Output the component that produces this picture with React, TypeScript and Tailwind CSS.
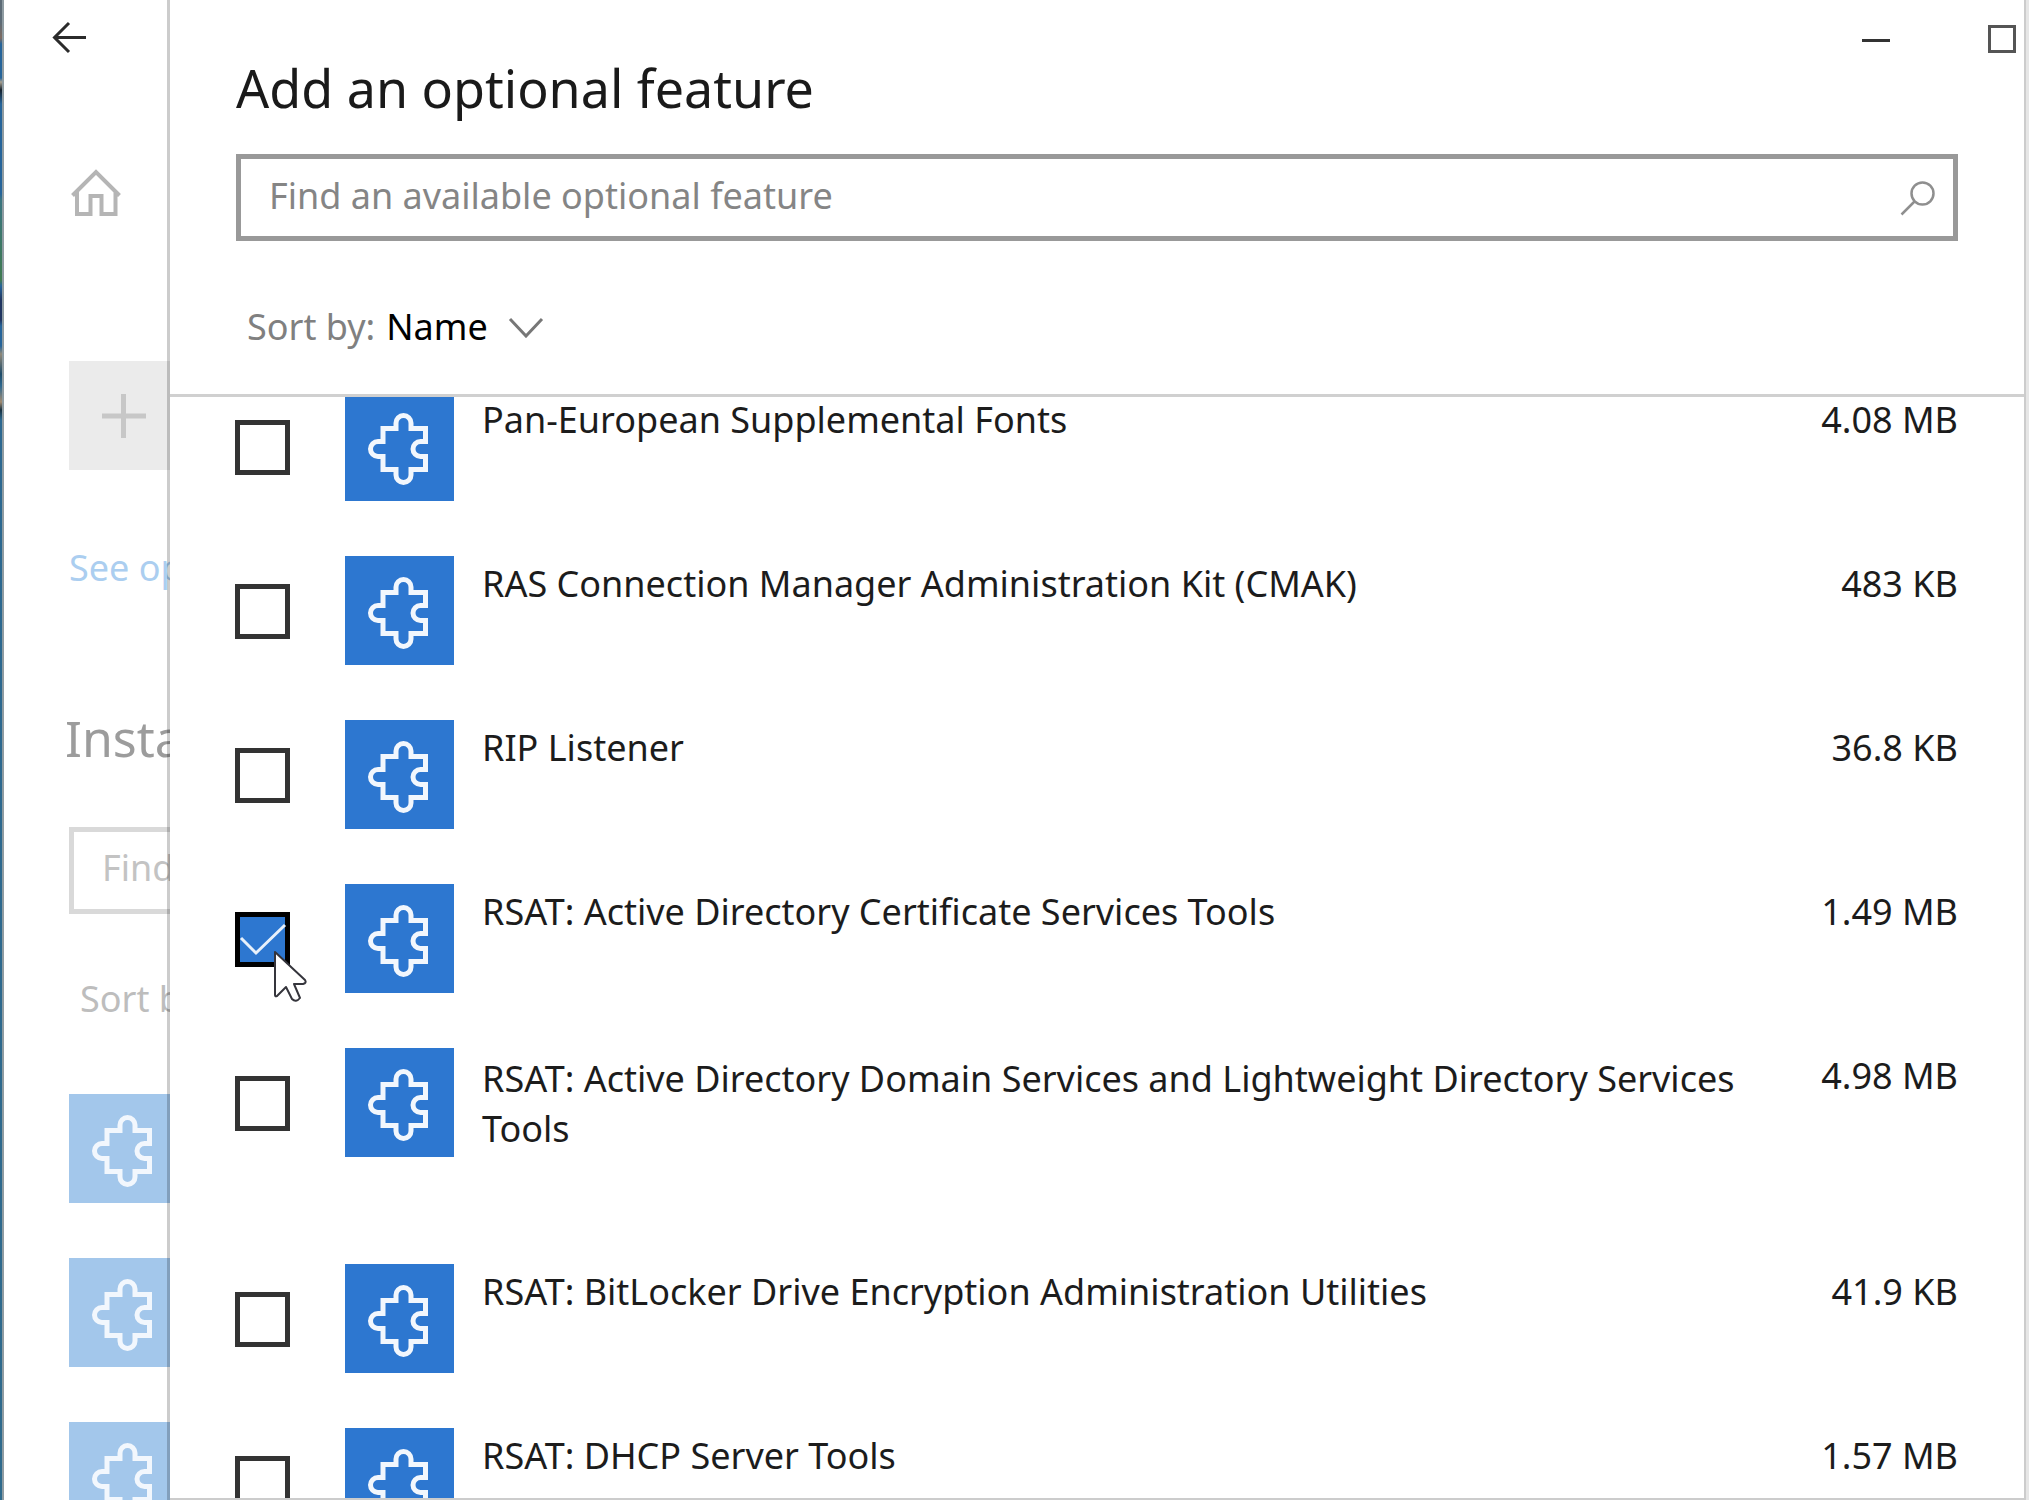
import { useState } from "react";

type Feature = { name: string; size: string; wraps?: boolean };

const features: Feature[] = [
  { name: "Pan-European Supplemental Fonts", size: "4.08 MB" },
  { name: "RAS Connection Manager Administration Kit (CMAK)", size: "483 KB" },
  { name: "RIP Listener", size: "36.8 KB" },
  { name: "RSAT: Active Directory Certificate Services Tools", size: "1.49 MB" },
  {
    name: "RSAT: Active Directory Domain Services and Lightweight Directory Services Tools",
    size: "4.98 MB",
    wraps: true,
  },
  { name: "RSAT: BitLocker Drive Encryption Administration Utilities", size: "41.9 KB" },
  { name: "RSAT: DHCP Server Tools", size: "1.57 MB" },
];

function PuzzleTile({ faded = false }: { faded?: boolean }) {
  return (
    <div className={faded ? "size-[109px] shrink-0 bg-[#a3c7eb]" : "size-[109px] shrink-0 bg-[#2d77d0]"}>
      <svg viewBox="0 0 109 109" className="size-full" fill="none" stroke="#f2f7fd" strokeWidth="5" aria-hidden="true">
        <path d="M38 36.5H51V31a7.5 7.5 0 0 1 15 0V36.5H80.5V49.5H75.5a7.5 7.5 0 0 0 0 15H80.5V77.5H66V83a7.5 7.5 0 0 1-15 0V77.5H38V64.5H33a7.5 7.5 0 0 1 0-15H38Z" />
      </svg>
    </div>
  );
}

function Pointer() {
  return (
    <svg
      viewBox="0 0 36 54"
      className="pointer-events-none absolute top-[38px] left-[38px] z-10 h-[54px] w-9"
      fill="#ffffff"
      stroke="#35353c"
      strokeWidth="2"
      strokeLinejoin="round"
      aria-hidden="true"
    >
      <path d="M2 2V45Q2 47 4 46L13 37L19 49Q23 53 27 48L21 34H30Q34 33 32 30Z" />
    </svg>
  );
}

function FeatureRow({
  feature,
  checked,
  pointed,
  onToggle,
}: {
  feature: Feature;
  checked: boolean;
  pointed: boolean;
  onToggle: () => void;
}) {
  return (
    <li className={feature.wraps ? "min-h-[216px]" : "min-h-[164px]"}>
      <label className="flex items-start">
        <span className="relative mt-7 mr-[55px] block size-[55px] shrink-0">
          <input
            type="checkbox"
            checked={checked}
            onChange={onToggle}
            className="block size-[55px] appearance-none border-[5px] border-[#333333] bg-white outline-none checked:border-black checked:bg-[#2d77d0]"
          />
          {checked && (
            <svg
              viewBox="0 0 55 55"
              className="pointer-events-none absolute inset-0"
              fill="none"
              stroke="#e8f1fb"
              strokeWidth="3"
              aria-hidden="true"
            >
              <path d="M6 26L21 41L50 13" />
            </svg>
          )}
          {pointed && <Pointer />}
        </span>
        <PuzzleTile />
        <span
          className={
            feature.wraps
              ? "ml-7 max-w-[1280px] flex-1 pt-1.5 text-[36px] leading-[50px] text-[#1c1c1c]"
              : "ml-7 max-w-[1280px] flex-1 pt-[3px] text-[36px] leading-[50px] text-[#1c1c1c]"
          }
        >
          {feature.name}
        </span>
        <span className="ml-auto shrink-0 pt-[3px] text-[36px] leading-[50px] text-[#1c1c1c]">{feature.size}</span>
      </label>
    </li>
  );
}

function Sidebar() {
  return (
    <aside className="flex w-[166px] shrink-0 flex-col overflow-hidden bg-white whitespace-nowrap">
      <button type="button" aria-label="Back" className="mt-5 ml-12 h-9 w-9">
        <svg viewBox="0 0 36 36" className="size-9" fill="none" stroke="#2b2b2b" strokeWidth="3" aria-hidden="true">
          <path d="M34 17.500H2M17 3L2.500 17.500L17 32" />
        </svg>
      </button>
      <button type="button" aria-label="Home" className="mt-28 ml-[67px] h-[50px] w-[50px]">
        <svg viewBox="0 0 50 50" className="size-[50px]" fill="none" stroke="#b5b5b5" strokeWidth="4" aria-hidden="true">
          <path d="M1.500 27.500L25 4L48.500 27.500M6 24V46H19.500V28H30.500V46H44.500V24" />
        </svg>
      </button>
      <button type="button" aria-label="Add a feature" className="mt-[143px] ml-[65px] size-[109px] bg-[#ebebeb]">
        <svg viewBox="0 0 109 109" className="size-full" stroke="#c7c7c7" strokeWidth="5" aria-hidden="true">
          <path d="M33 55H77M54.500 33V77" />
        </svg>
      </button>
      <a href="#history" className="mt-[73px] ml-[65px] text-[36px] leading-[50px] text-[#abcef0]">
        See optional feature history
      </a>
      <h2 className="mt-[113px] ml-[61px] text-[50px] leading-[64px] text-[#9c9c9c]">Installed features</h2>
      <input
        type="text"
        aria-label="Find an installed optional feature"
        placeholder="Find an installed optional feature"
        className="mt-[57px] ml-[65px] h-[87px] w-[600px] shrink-0 border-[5px] border-[#d9d9d9] px-7 pb-1.5 text-[36px] placeholder:text-[#c3c3c3]"
      />
      <p className="mt-[60px] ml-[76px] text-[36px] leading-[50px] text-[#bdbdbd]">Sort by: Name</p>
      <div className="mt-[70px] ml-[65px] flex flex-col gap-[55px]">
        <PuzzleTile faded />
        <PuzzleTile faded />
        <PuzzleTile faded />
      </div>
    </aside>
  );
}

export default function App() {
  const [selected, setSelected] = useState<number[]>([3]);
  const toggle = (i: number) =>
    setSelected((s) => (s.includes(i) ? s.filter((n) => n !== i) : [...s, i]));

  return (
    <div className="flex h-screen overflow-hidden bg-white font-['Noto_Sans',sans-serif]">
      <div className="w-1 shrink-0 border-r-2 border-[#8f9ca2] bg-[linear-gradient(to_bottom,#5c6b76_0px,#5c6b76_22px,#7d6a60_38px,#25649a_44px,#25649a_78px,#a8a090_82px,#14202c_90px,#25649a_104px,#25649a_194px,#3a7580_200px,#3f7a50_280px,#25649a_286px,#1f3560_300px,#1f3560_320px,#25649a_326px,#25649a_346px,#8f8878_354px,#1d4a68_374px,#2c6890_386px,#a08a70_402px,#17303f_410px,#2c6890_420px,#2f6a8c_1500px)]" />
      <Sidebar />
      <main className="z-10 -ml-[3px] flex min-w-0 flex-1 flex-col border-r-2 border-b-2 border-l-[3px] border-black/20 bg-white bg-clip-padding">
        <header className="border-b-[3px] border-[#d0d0d0] pb-[35px]">
          <div className="flex h-14 items-start justify-end gap-24 pt-6 pr-[7px]">
            <button type="button" aria-label="Minimize" className="size-[30px]">
              <svg viewBox="0 0 30 30" className="size-[30px]" stroke="#333333" strokeWidth="3" aria-hidden="true">
                <path d="M1 16.500H29" />
              </svg>
            </button>
            <button type="button" aria-label="Maximize" className="size-[30px]">
              <svg viewBox="0 0 30 30" className="size-[30px]" fill="none" stroke="#555555" strokeWidth="3" aria-hidden="true">
                <path d="M2.500 2.500H27.500V27.500H2.500Z" />
              </svg>
            </button>
          </div>
          <div className="pr-[66px] pl-[66px]">
            <h1 className="text-[52px] leading-[64px] text-[#1a1a1a]">Add an optional feature</h1>
            <div className="mt-[34px] flex h-[87px] items-center border-[5px] border-[#999999] pr-[17px] pl-7">
              <input
                type="text"
                aria-label="Find an available optional feature"
                placeholder="Find an available optional feature"
                className="min-w-0 flex-1 pb-1 text-[36px] leading-[50px] outline-none placeholder:text-[#858585]"
              />
              <svg viewBox="0 0 36 36" className="size-9" fill="none" stroke="#8f8f8f" strokeWidth="2.500" aria-hidden="true">
                <circle cx="22.500" cy="13.500" r="11" />
                <path d="M14.500 21.500L1.500 34.500" />
              </svg>
            </div>
            <button type="button" className="mt-[54px] ml-[11px] flex items-center text-[36px] leading-[64px] text-[#808080]">
              <span>Sort by:</span>
              <span className="ml-[11px] text-black">Name</span>
              <svg viewBox="0 0 36 22" className="ml-5 h-[22px] w-9" fill="none" stroke="#777777" strokeWidth="3" aria-hidden="true">
                <path d="M2 3L18 20L34 3" />
              </svg>
            </button>
          </div>
        </header>
        <div className="min-h-0 flex-1 overflow-hidden">
          <ul className="-mt-[5px] pr-[66px] pl-[65px]">
            {features.map((f, i) => (
              <FeatureRow
                key={f.name}
                feature={f}
                checked={selected.includes(i)}
                pointed={i === 3}
                onToggle={() => toggle(i)}
              />
            ))}
          </ul>
        </div>
      </main>
      <div className="w-[3px] shrink-0 bg-[#e6e6e6]" />
    </div>
  );
}
